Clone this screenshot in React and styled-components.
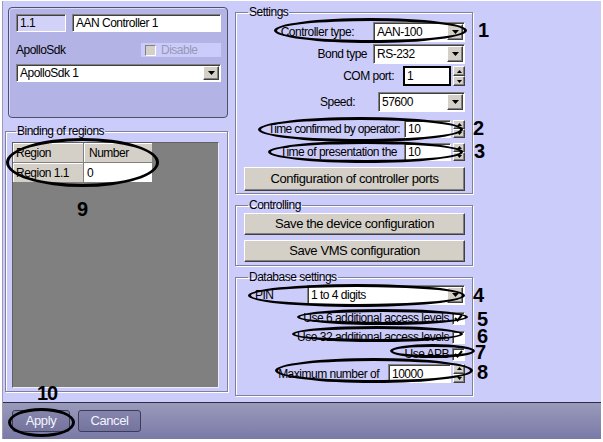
import React from 'react'
import styled, { createGlobalStyle, css } from 'styled-components'

const GlobalStyle = createGlobalStyle`
  html, body {
    margin: 0;
    padding: 0;
    background: #fff;
  }
  body {
    font-family: "Liberation Sans", Arial, sans-serif;
    font-size: 12px;
    letter-spacing: -0.5px;
    line-height: 14px;
    color: #000;
  }
  * {
    box-sizing: border-box;
  }
`

const sunken = css`
  border: 1px solid;
  border-color: #808080 #fff #fff #808080;
  box-shadow: inset 1px 1px 0 #404040;
`

const raised = css`
  border: 1px solid;
  border-color: #fff #404040 #404040 #fff;
  box-shadow: inset -1px -1px 0 #808080;
  background: #d4d0c8;
`

const Root = styled.div`
  position: relative;
  width: 603px;
  height: 442px;
  background: #fff;
  overflow: hidden;
`

const Window = styled.div`
  margin: 1px 0 0 2px;
  width: 599px;
  height: 438px;
  border-left: 1px solid #9c9cb0;
  background: #ccccfa;
  display: flex;
  flex-direction: column;
`

const Main = styled.div`
  flex: 1;
  display: flex;
`

const LeftCol = styled.div`
  width: 223px;
  margin-left: 2px;
  display: flex;
  flex-direction: column;
`

const RightCol = styled.div`
  width: 238px;
  margin-left: 7px;
  display: flex;
  flex-direction: column;
`

const Panel = styled.div`
  margin: 6px 0 0 3px;
  width: 220px;
  height: 111px;
  border: 1px solid #50506a;
  border-radius: 4px;
  background: #b3b3e6;
  box-shadow: inset 1px 1px 0 #d8d8fa;
  padding: 6px 6px 0 7px;
  display: flex;
  flex-direction: column;
`

const PanelRow = styled.div`
  display: flex;
  align-items: center;
  justify-content: space-between;
  gap: 6px;
  margin-top: ${p => p.$mt || 0}px;
  height: ${p => p.$h || 18}px;
`

const DisableBox = styled.div`
  width: 80px;
  height: 14px;
  background: #ccccfa;
  display: flex;
  align-items: center;
  gap: 5px;
  padding-left: 4px;
  color: #9898b4;
`

const GrayBox = styled.span`
  width: 11px;
  height: 11px;
  border: 1px solid;
  border-color: #808080 #fff #fff #808080;
  background: #d4d0c8;
`

const Field = styled.div`
  ${sunken};
  width: ${p => p.$w}px;
  height: ${p => p.$h || 18}px;
  background: ${p => p.$bg || '#fff'};
  display: flex;
  align-items: center;
  padding-left: 3px;
  white-space: nowrap;
  ${p => p.$focus && css`
    border: 2px solid #000;
    box-shadow: none;
    padding-left: 2px;
  `}
`

const DropBtn = styled.span`
  ${raised};
  margin: 1px 1px 1px auto;
  width: 16px;
  align-self: stretch;
  display: flex;
  align-items: center;
  justify-content: center;
`

const Group = styled.fieldset`
  margin: ${p => p.$mt || 0}px 0 0 0;
  height: ${p => p.$h}px;
  padding: 0 7px 0 ${p => p.$pl ?? 8}px;
  border: 1px solid #80809a;
  box-shadow: inset 1px 1px 0 #fff, 1px 1px 0 #fff;
  display: flex;
  flex-direction: column;
  min-width: 0;
`

const Legend = styled.legend`
  padding: 0 1px;
  margin-left: 4px;
  line-height: 12px;
`

const GridArea = styled.div`
  margin-top: 5px;
  width: 207px;
  height: 246px;
  background: #808080;
  border: 1px solid;
  border-color: #606060 #eeeef8 #eeeef8 #606060;
`

const Table = styled.div`
  display: grid;
  grid-template-columns: 71px 69px;
  grid-auto-rows: 20px;
`

const Cell = styled.div`
  display: flex;
  align-items: center;
  padding-left: ${p => p.$pl ?? 3}px;
  background: ${p => (p.$white ? '#fff' : '#d4d0c8')};
  border-right: 1px solid #808080;
  border-bottom: 1px solid #808080;
  ${p => !p.$white && css`
    box-shadow: inset 1px 1px 0 #fff;
  `}
`

const Row = styled.div`
  display: flex;
  align-items: center;
  justify-content: ${p => p.$start ? 'flex-start' : 'flex-end'};
  gap: ${p => p.$gap || 0}px;
  margin-top: ${p => p.$mt || 0}px;
  white-space: nowrap;
`

const Label = styled.span`
  width: ${p => (p.$w ? `${p.$w}px` : 'auto')};
  padding-left: ${p => p.$pl || 0}px;
  letter-spacing: ${p => p.$ls ?? -0.5}px;
`

const Pair = styled.div`
  display: flex;
  align-items: center;
  gap: 2px;
`

const SpinCol = styled.div`
  width: 12px;
  height: ${p => p.$h}px;
  display: flex;
  flex-direction: column;
`

const SpinBtn = styled.span`
  ${raised};
  flex: 1;
  display: flex;
  align-items: center;
  justify-content: center;
`

const WinButton = styled.button`
  ${raised};
  margin-top: ${p => p.$mt || 0}px;
  width: 221px;
  height: ${p => p.$h || 22}px;
  font: inherit;
  font-size: 13px;
  letter-spacing: -0.4px;
  color: #000;
  padding: 0;
`

const Check = styled.span`
  width: 13px;
  height: 13px;
  background: #fff;
  border: 1px solid;
  border-color: #808080 #fff #fff #808080;
  box-shadow: inset 1px 1px 0 #404040;
  display: flex;
  align-items: center;
  justify-content: center;
`

const Footer = styled.div`
  height: 37px;
  border-top: 1px solid #2c2c46;
  background: linear-gradient(#9a9aba, #7a7aa8);
  display: flex;
  align-items: center;
  gap: 8px;
  padding-left: 9px;
`

const FooterButton = styled.button`
  width: ${p => p.$w}px;
  height: 22px;
  border: 1px solid #3c3c58;
  border-radius: 3px;
  background: linear-gradient(#8484ac, #74749e);
  color: #f4f4ff;
  font: inherit;
  font-size: 13px;
  letter-spacing: -0.4px;
  padding: 0;
`

const Ellipse = styled.div`
  position: absolute;
  left: ${p => p.$x}px;
  top: ${p => p.$y}px;
  width: ${p => p.$w}px;
  height: ${p => p.$h}px;
  border: 3px solid #000;
  border-radius: 50%;
  pointer-events: none;
`

const Num = styled.span`
  position: absolute;
  left: ${p => p.$x}px;
  top: ${p => p.$y}px;
  font-family: "Liberation Sans", Arial, sans-serif;
  font-weight: bold;
  font-size: 20px;
  letter-spacing: -1px;
  line-height: 15px;
  color: #000;
`

const Arrow = ({ up }) => (
  <svg width="7" height="4" viewBox="0 0 7 4">
    <polygon points={up ? '0,4 7,4 3.5,0' : '0,0 7,0 3.5,4'} fill="#000" />
  </svg>
)

const SmallArrow = ({ up }) => (
  <svg width="5" height="3" viewBox="0 0 5 3">
    <polygon points={up ? '0,3 5,3 2.5,0' : '0,0 5,0 2.5,3'} fill="#000" />
  </svg>
)

const Select = ({ w, h = 20, children }) => (
  <Field $w={w} $h={h}>
    {children}
    <DropBtn>
      <Arrow />
    </DropBtn>
  </Field>
)

const Spin = ({ w, h = 18, focus, children }) => (
  <Pair>
    <Field $w={w} $h={h} $focus={focus}>{children}</Field>
    <SpinCol $h={h}>
      <SpinBtn><SmallArrow up /></SpinBtn>
      <SpinBtn><SmallArrow /></SpinBtn>
    </SpinCol>
  </Pair>
)

const CheckMark = () => (
  <svg width="9" height="8" viewBox="0 0 9 8">
    <polyline points="1,4 3.5,6.5 8,1" fill="none" stroke="#000" strokeWidth="2" />
  </svg>
)

const ellipses = [
  { x: 6, y: 138, w: 153, h: 49 },
  { x: 274, y: 18, w: 193, h: 25 },
  { x: 258, y: 117, w: 205, h: 25 },
  { x: 268, y: 141, w: 195, h: 22 },
  { x: 248, y: 284, w: 217, h: 23 },
  { x: 297, y: 309, w: 171, h: 16 },
  { x: 292, y: 326, w: 171, h: 16 },
  { x: 390, y: 344, w: 85, h: 14 },
  { x: 275, y: 358, w: 198, h: 25 },
  { x: 8, y: 408, w: 67, h: 29 },
]

const numbers = [
  { n: '1', x: 478, y: 23 },
  { n: '2', x: 473, y: 121 },
  { n: '3', x: 474, y: 144 },
  { n: '4', x: 473, y: 288 },
  { n: '5', x: 477, y: 312 },
  { n: '6', x: 477, y: 329 },
  { n: '7', x: 475, y: 345 },
  { n: '8', x: 477, y: 365 },
  { n: '9', x: 77, y: 202 },
  { n: '10', x: 37, y: 386 },
]

export default function App() {
  return (
    <Root>
      <GlobalStyle />
      <Window>
        <Main>
          <LeftCol>
            <Panel>
              <PanelRow>
                <Field $w={50} $bg="#d2d2f8">1.1</Field>
                <Field $w={149}>AAN Controller 1</Field>
              </PanelRow>
              <PanelRow $mt={11} $h={14}>
                <span>ApolloSdk</span>
                <DisableBox>
                  <GrayBox />
                  Disable
                </DisableBox>
              </PanelRow>
              <PanelRow $mt={7}>
                <Select w={205} h={18}>ApolloSdk 1</Select>
              </PanelRow>
            </Panel>
            <Group $mt={7} $h={267} $pl={6}>
              <Legend>Binding of regions</Legend>
              <GridArea>
                <Table>
                  <Cell>Region</Cell>
                  <Cell $pl={5}>Number</Cell>
                  <Cell>Region 1.1</Cell>
                  <Cell $white>0</Cell>
                </Table>
              </GridArea>
            </Group>
          </LeftCol>

          <RightCol>
            <Group $mt={5} $h={188}>
              <Legend>Settings</Legend>
              <Row $mt={4} $gap={19}>
                <Label>Controller type:</Label>
                <Select w={92}>AAN-100</Select>
              </Row>
              <Row $mt={2} $gap={6}>
                <Label>Bond type</Label>
                <Select w={92}>RS-232</Select>
              </Row>
              <Row $mt={2} $gap={9}>
                <Label>COM port:</Label>
                <Spin w={48} h={20} focus>1</Spin>
              </Row>
              <Row $mt={6} $gap={23}>
                <Label>Speed:</Label>
                <Select w={87}>57600</Select>
              </Row>
              <Row $mt={8} $gap={4}>
                <Label $ls={-0.65}>Time confirmed by operator:</Label>
                <Spin w={47}>10</Spin>
              </Row>
              <Row $mt={5} $gap={7}>
                <Label>Time of presentation the</Label>
                <Spin w={47}>10</Spin>
              </Row>
              <WinButton $mt={6} $h={24}>Configuration of controller ports</WinButton>
            </Group>

            <Group $mt={5} $h={67}>
              <Legend>Controlling</Legend>
              <WinButton $mt={2}>Save the device configuration</WinButton>
              <WinButton $mt={5}>Save VMS configuration</WinButton>
            </Group>

            <Group $mt={5} $h={125}>
              <Legend>Database settings</Legend>
              <Row $start $mt={2}>
                <Label $w={63} $pl={11}>PIN</Label>
                <Select w={158}>1 to 4 digits</Select>
              </Row>
              <Row $mt={6} $gap={3}>
                <Label>Use 6 additional access levels</Label>
                <Check><CheckMark /></Check>
              </Row>
              <Row $mt={5} $gap={3}>
                <Label>Use 32 additional access levels</Label>
                <Check />
              </Row>
              <Row $mt={3} $gap={3}>
                <Label>Use APB</Label>
                <Check><CheckMark /></Check>
              </Row>
              <Row $mt={3} $gap={9}>
                <Label>Maximum number of</Label>
                <Spin w={63} h={19}>10000</Spin>
              </Row>
            </Group>
          </RightCol>
        </Main>

        <Footer>
          <FooterButton $w={58}>Apply</FooterButton>
          <FooterButton $w={63}>Cancel</FooterButton>
        </Footer>
      </Window>

      {ellipses.map((e, i) => (
        <Ellipse key={i} $x={e.x} $y={e.y} $w={e.w} $h={e.h} />
      ))}
      {numbers.map(n => (
        <Num key={n.n} $x={n.x} $y={n.y}>{n.n}</Num>
      ))}
    </Root>
  )
}
